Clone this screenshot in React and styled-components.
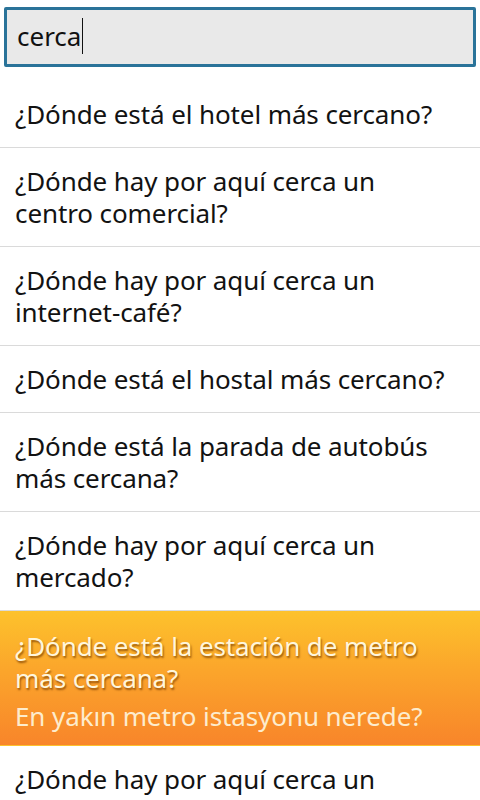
import React from 'react'
import styled, { createGlobalStyle } from 'styled-components'

const GlobalStyle = createGlobalStyle`
  html, body {
    margin: 0;
    padding: 0;
    background: #ffffff;
  }
  body {
    font-family: "Noto Sans", "Open Sans", sans-serif;
    overflow: hidden;
  }
`

const Screen = styled.div`
  width: 480px;
  height: 800px;
  overflow: hidden;
  background: #ffffff;
`

const SearchBar = styled.div`
  height: 81px;
  padding: 7px 4px 0;
  box-sizing: border-box;
`

const SearchBox = styled.div`
  height: 60px;
  box-sizing: border-box;
  border: 3px solid #2a7399;
  border-radius: 2px;
  background: #e9e9e9;
  display: flex;
  align-items: center;
  padding: 0 0 2px 10px;
  font-size: 26px;
  color: #111111;
`

const Caret = styled.span`
  display: inline-block;
  width: 1px;
  height: 36px;
  background: #111111;
  margin-left: 1px;
`

const List = styled.ul`
  list-style: none;
  margin: 0;
  padding: 0;
`

const Row = styled.li`
  padding: ${p => (p.$active ? '19px 15px 13px' : '17px 15px 17px')};
  border-bottom: 1px solid ${p => (p.$active ? 'transparent' : '#dadada')};
  background: ${p => (p.$active ? 'linear-gradient(to bottom, #fdc22c 0%, #fba52b 45%, #f8852a 100%)' : '#ffffff')};
  font-size: 26px;
  line-height: 32px;
  letter-spacing: -0.1px;
  color: #121212;
`

const Phrase = styled.div`
  color: ${p => (p.$active ? '#fff6dc' : '#121212')};
  text-shadow: ${p => (p.$active ? '1px 2px 2px rgba(120, 60, 0, 0.75)' : 'none')};
`

const Translation = styled.div`
  margin-top: 6px;
  color: #fdeccd;
`

const phrases = [
  { es: '¿Dónde está el hotel más cercano?' },
  { es: ['¿Dónde hay por aquí cerca un', 'centro comercial?'] },
  { es: ['¿Dónde hay por aquí cerca un', 'internet-café?'] },
  { es: '¿Dónde está el hostal más cercano?' },
  { es: ['¿Dónde está la parada de autobús', 'más cercana?'] },
  { es: ['¿Dónde hay por aquí cerca un', 'mercado?'] },
  {
    es: ['¿Dónde está la estación de metro', 'más cercana?'],
    tr: 'En yakın metro istasyonu nerede?',
    active: true,
  },
  { es: '¿Dónde hay por aquí cerca un' },
]

export default function App() {
  return (
    <Screen>
      <GlobalStyle />
      <SearchBar>
        <SearchBox>
          cerca<Caret />
        </SearchBox>
      </SearchBar>
      <List>
        {phrases.map((p, i) => (
          <Row key={i} $active={p.active}>
            <Phrase $active={p.active}>
              {Array.isArray(p.es)
                ? p.es.map((line, j) => <div key={j}>{line}</div>)
                : p.es}
            </Phrase>
            {p.tr && <Translation>{p.tr}</Translation>}
          </Row>
        ))}
      </List>
    </Screen>
  )
}
